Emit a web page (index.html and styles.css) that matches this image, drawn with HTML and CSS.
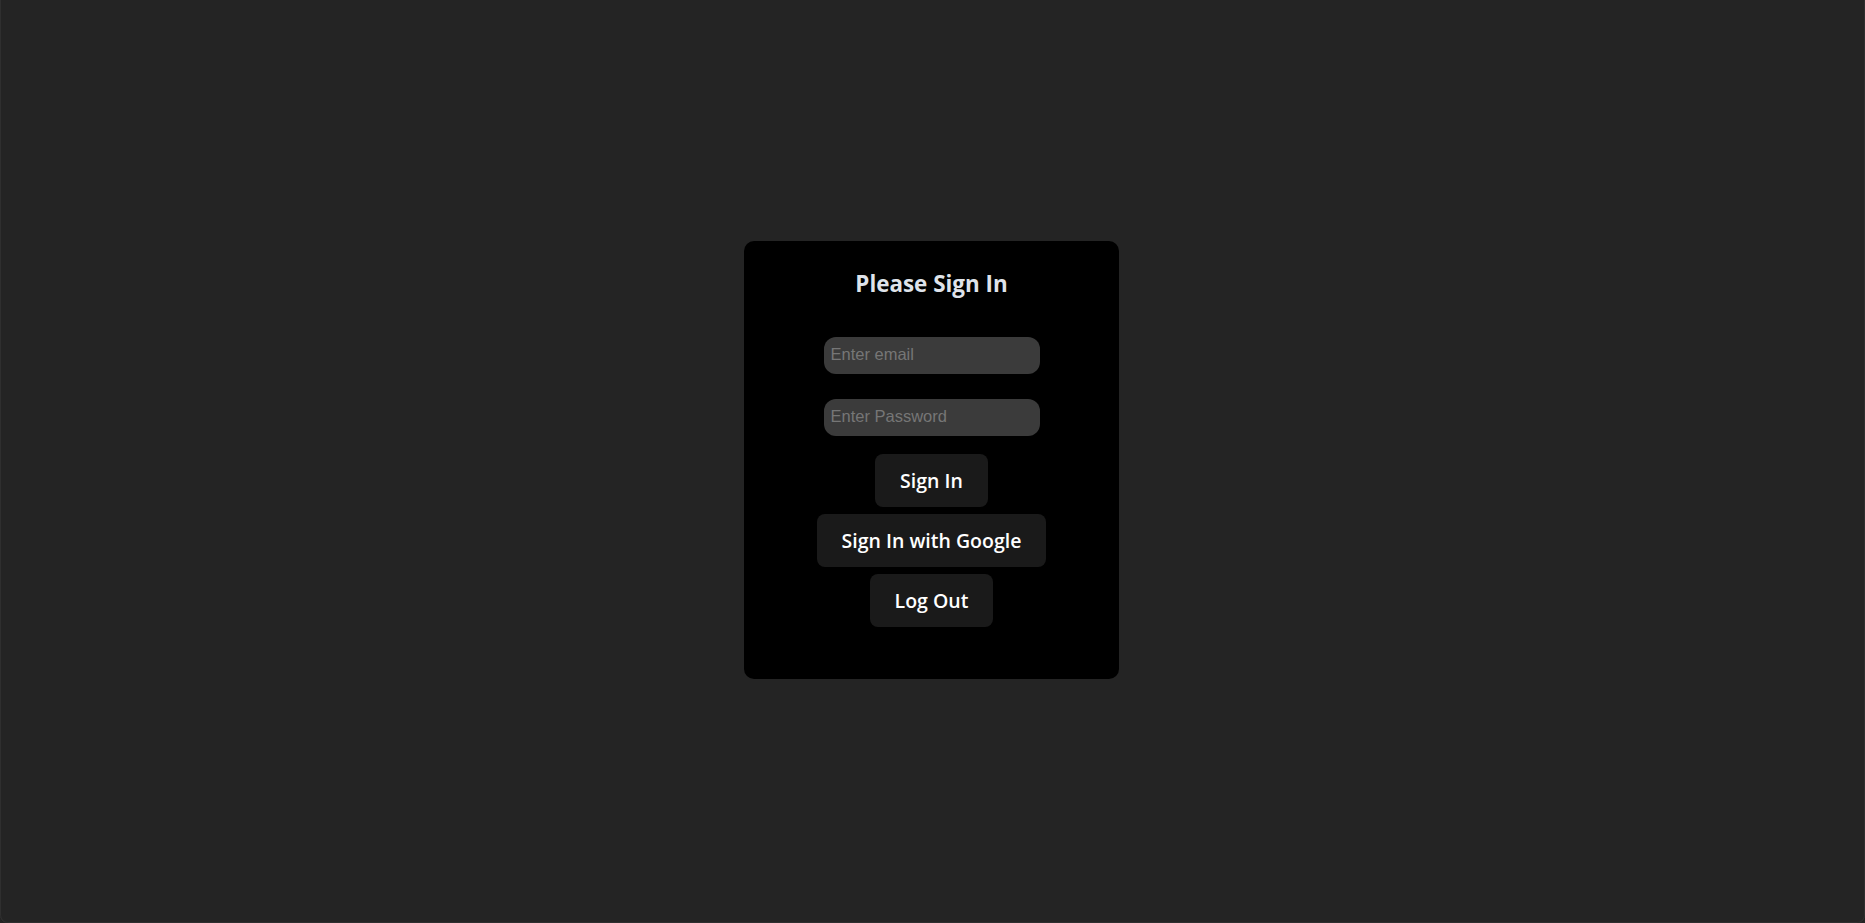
FILE: index.html
```html
<!DOCTYPE html>
<html lang="en">
<head>
<meta charset="utf-8">
<title>Sign In</title>
<link rel="stylesheet" href="styles.css">
</head>
<body>
<div class="app">
  <div class="card">
    <h2 class="title">Please Sign In</h2>
    <input class="field" type="email" placeholder="Enter email">
    <input class="field field-gap" type="password" placeholder="Enter Password">
    <div class="actions">
      <button class="btn">Sign In</button>
      <button class="btn">Sign In with Google</button>
      <button class="btn">Log Out</button>
    </div>
  </div>
</div>
</body>
</html>
```

FILE: styles.css
```css
html, body {
  margin: 0;
  padding: 0;
  height: 100%;
}

body {
  background: #242424;
  font-family: "Open Sans", "Noto Sans", sans-serif;
  color: rgba(255, 255, 255, 0.87);
}

.app {
  box-sizing: border-box;
  height: 100vh;
  display: flex;
  align-items: center;
  justify-content: center;
  box-shadow: inset 1px 0 0 #2f2f2f, inset -1px 0 0 #2f2f2f, inset 0 -1px 0 #2f2f2f;
  border-radius: 0 0 8px 8px;
}

.card {
  width: 375px;
  box-sizing: border-box;
  background: #000;
  border-radius: 10px;
  padding: 27px 0 52px;
  margin: 0 2px 3px 0;
  display: flex;
  flex-direction: column;
  align-items: center;
}

.title {
  margin: 0 0 37px;
  font-size: 22.4px;
  line-height: 32px;
  font-weight: 700;
  color: #dfe3ea;
}

.field {
  box-sizing: border-box;
  width: 216px;
  height: 37px;
  border: none;
  outline: none;
  border-radius: 12px;
  background: #3b3b3b;
  padding: 0 7px 2px;
  font-family: "Liberation Sans", Arial, sans-serif;
  font-size: 16.5px;
  color: #ddd;
}

.field::placeholder {
  color: #767676;
}

.field-gap {
  margin-top: 25px;
}

.actions {
  margin-top: 18px;
  display: flex;
  flex-direction: column;
  align-items: center;
  gap: 7px;
}

.btn {
  box-sizing: border-box;
  height: 53px;
  padding: 0 25px;
  border: none;
  border-radius: 8px;
  background: #1a1a1a;
  color: #fff;
  font-family: "Open Sans", "Noto Sans", sans-serif;
  font-size: 19.5px;
  font-weight: 600;
  cursor: pointer;
}
```
